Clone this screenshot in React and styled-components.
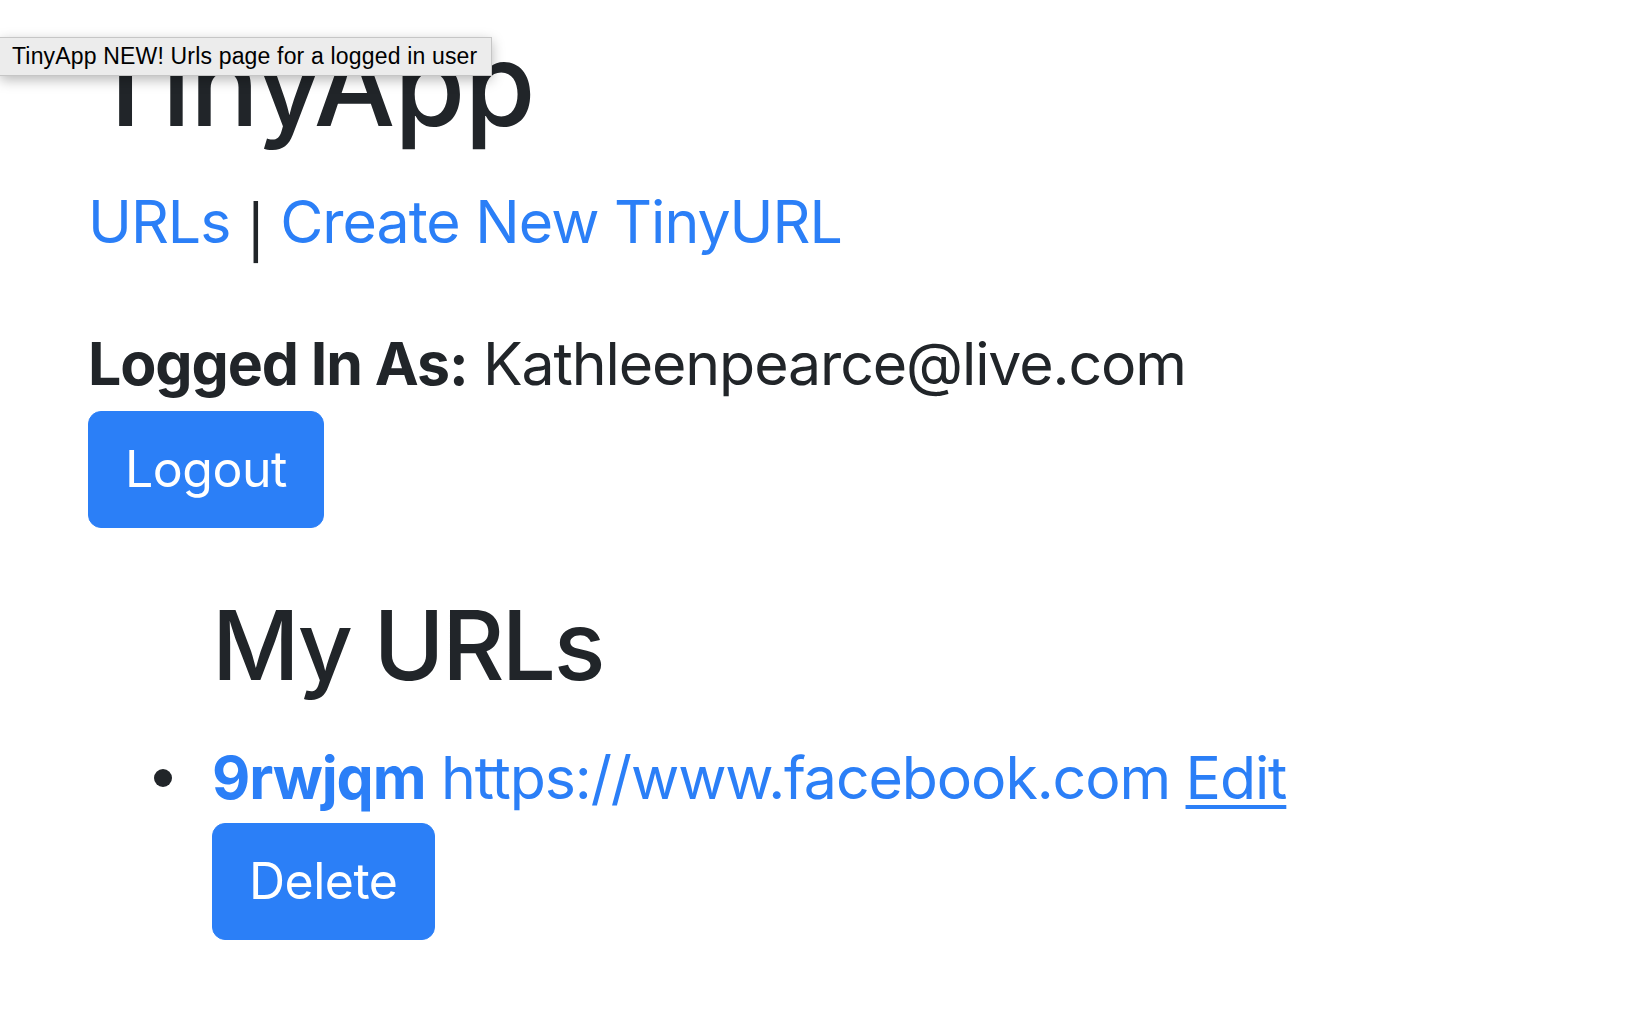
import React from "react";
import styled, { createGlobalStyle } from "styled-components";

const GlobalStyle = createGlobalStyle`
  html, body { margin: 0; padding: 0; background: #ffffff; }
  body {
    font-family: Inter, "Noto Sans", "Liberation Sans", sans-serif;
    color: #212529;
    font-size: 50px;
    line-height: 1.5;
  }
`;

const Page = styled.div`
  position: relative;
  min-height: 1010px;
  padding: 16px 0 0 88px;
  box-sizing: border-box;
`;

const Tooltip = styled.div`
  position: absolute;
  top: 37px;
  left: 0;
  width: 492px;
  height: 39px;
  box-sizing: border-box;
  padding-left: 12px;
  display: flex;
  align-items: center;
  background: #ececec;
  border: 1px solid #c6c6c6;
  border-left: none;
  box-shadow: 0 4px 12px rgba(0, 0, 0, 0.28);
  font-family: "Liberation Sans", Arial, sans-serif;
  font-size: 23px;
  letter-spacing: 0.17px;
  color: #000;
  white-space: nowrap;
  z-index: 5;
`;

const Title = styled.h1`
  margin: 0;
  font-size: 115px;
  font-weight: 500;
  line-height: 1.2;
  letter-spacing: -1px;
`;

const Nav = styled.p`
  margin: 24px 0 0;
  font-size: 59px;
  line-height: 1.5;
  letter-spacing: -1px;
`;

const Link = styled.a`
  color: #2b7ff7;
  text-decoration: ${(p) => (p.$underline ? "underline" : "none")};
  text-decoration-thickness: 4px;
  text-underline-offset: 6px;
  font-weight: ${(p) => (p.$bold ? 700 : 400)};
  cursor: pointer;
`;

const Sep = styled.span`
  display: inline-block;
  color: #212529;
  transform: translateY(0.17em) scaleY(0.88);
`;

const UserLine = styled.p`
  margin: 53px 0 0;
  font-size: 59px;
  line-height: 1.5;
  letter-spacing: -1.1px;
`;

const Strong = styled.strong`
  font-weight: 700;
`;

const Button = styled.button`
  display: block;
  margin: ${(p) => p.$mt || 0}px 0 0;
  font-family: inherit;
  font-size: 50px;
  line-height: 1.5;
  font-weight: 400;
  letter-spacing: -0.5px;
  color: #ffffff;
  background: #2b7ff7;
  border: 1px solid #2b7ff7;
  border-radius: 13px;
  padding: 20px 36px;
  cursor: pointer;
`;

const Section = styled.section`
  margin: 60px 0 0 124px;
`;

const Subtitle = styled.h2`
  margin: 0;
  font-size: 96px;
  font-weight: 500;
  line-height: 1.2;
  letter-spacing: -2.5px;
`;

const List = styled.ul`
  margin: 31px 0 0;
  padding: 0;
  list-style: none;
`;

const Item = styled.li`
  position: relative;
  font-size: 59px;
  line-height: 1.5;
  letter-spacing: -1.1px;

  &::before {
    content: "";
    position: absolute;
    left: -58px;
    top: 35px;
    width: 18px;
    height: 18px;
    border-radius: 50%;
    background: #212529;
  }
`;

export default function App() {
  return (
    <>
      <GlobalStyle />
      <Page>
        <Tooltip>TinyApp NEW! Urls page for a logged in user</Tooltip>
        <Title>TinyApp</Title>
        <Nav>
          <Link>URLs</Link> <Sep>|</Sep> <Link>Create New TinyURL</Link>
        </Nav>
        <UserLine>
          <Strong>Logged In As:</Strong> Kathleenpearce@live.com
        </UserLine>
        <Button $mt={3}>Logout</Button>
        <Section>
          <Subtitle>My URLs</Subtitle>
          <List>
            <Item>
              <Link $bold>9rwjqm</Link> <Link>https://www.facebook.com</Link>{" "}
              <Link $underline>Edit</Link>
              <Button>Delete</Button>
            </Item>
          </List>
        </Section>
      </Page>
    </>
  );
}
